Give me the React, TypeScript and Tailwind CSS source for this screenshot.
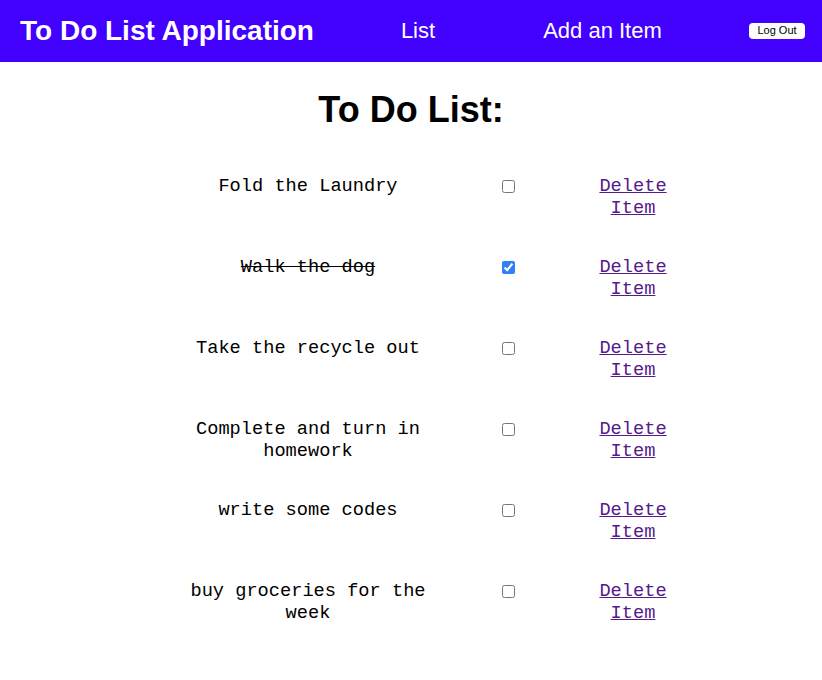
import React, { useState } from 'react';

interface TodoItem {
  id: number;
  text: string;
  done: boolean;
}

const initialItems: TodoItem[] = [
  { id: 1, text: 'Fold the Laundry', done: false },
  { id: 2, text: 'Walk the dog', done: true },
  { id: 3, text: 'Take the recycle out', done: false },
  { id: 4, text: 'Complete and turn in homework', done: false },
  { id: 5, text: 'write some codes', done: false },
  { id: 6, text: 'buy groceries for the week', done: false },
];

function Header() {
  return (
    <header className="flex h-[62px] items-center bg-[#4200ff] pl-5 pr-[17px] text-white font-['Liberation_Sans',Arial,sans-serif]">
      <div className="w-[360px] text-[28px] font-bold leading-none">To Do List Application</div>
      <a className="w-[76px] text-center text-[22px] leading-none">List</a>
      <a className="w-[293px] text-center text-[22px] leading-none">Add an Item</a>
      <button className="h-4 w-14 rounded-[4px] bg-white pb-px text-[11px] leading-none text-black">
        Log Out
      </button>
    </header>
  );
}

function TodoRow({ item, onToggle }: { item: TodoItem; onToggle: () => void }) {
  return (
    <div className="flex items-start">
      <div
        className={`w-[264px] text-center ${item.done ? 'line-through' : ''}`}
      >
        {item.text}
      </div>
      <div className="flex h-[22px] w-[136px] items-center justify-center">
        <input
          type="checkbox"
          checked={item.done}
          onChange={onToggle}
          className="m-0 h-[13px] w-[13px] accent-[#2f80f6]"
        />
      </div>
      <div className="w-[114px] text-center">
        <a href="#" className="text-[#551a8b] underline">
          Delete Item
        </a>
      </div>
    </div>
  );
}

export default function App() {
  const [items, setItems] = useState<TodoItem[]>(initialItems);

  const toggle = (id: number) =>
    setItems((prev) => prev.map((it) => (it.id === id ? { ...it, done: !it.done } : it)));

  return (
    <div className="min-h-[680px] bg-white text-black">
      <Header />
      <h1 className="mt-[27px] text-center text-[36px] font-bold leading-[41px] font-['Liberation_Sans',Arial,sans-serif]">
        To Do List:
      </h1>
      <div className="mt-[45px] flex flex-col gap-y-[37px] pl-[176px] text-[18.67px] leading-[22px] font-['Liberation_Mono','Courier_New',monospace]">
        {items.map((item) => (
          <TodoRow key={item.id} item={item} onToggle={() => toggle(item.id)} />
        ))}
      </div>
    </div>
  );
}
